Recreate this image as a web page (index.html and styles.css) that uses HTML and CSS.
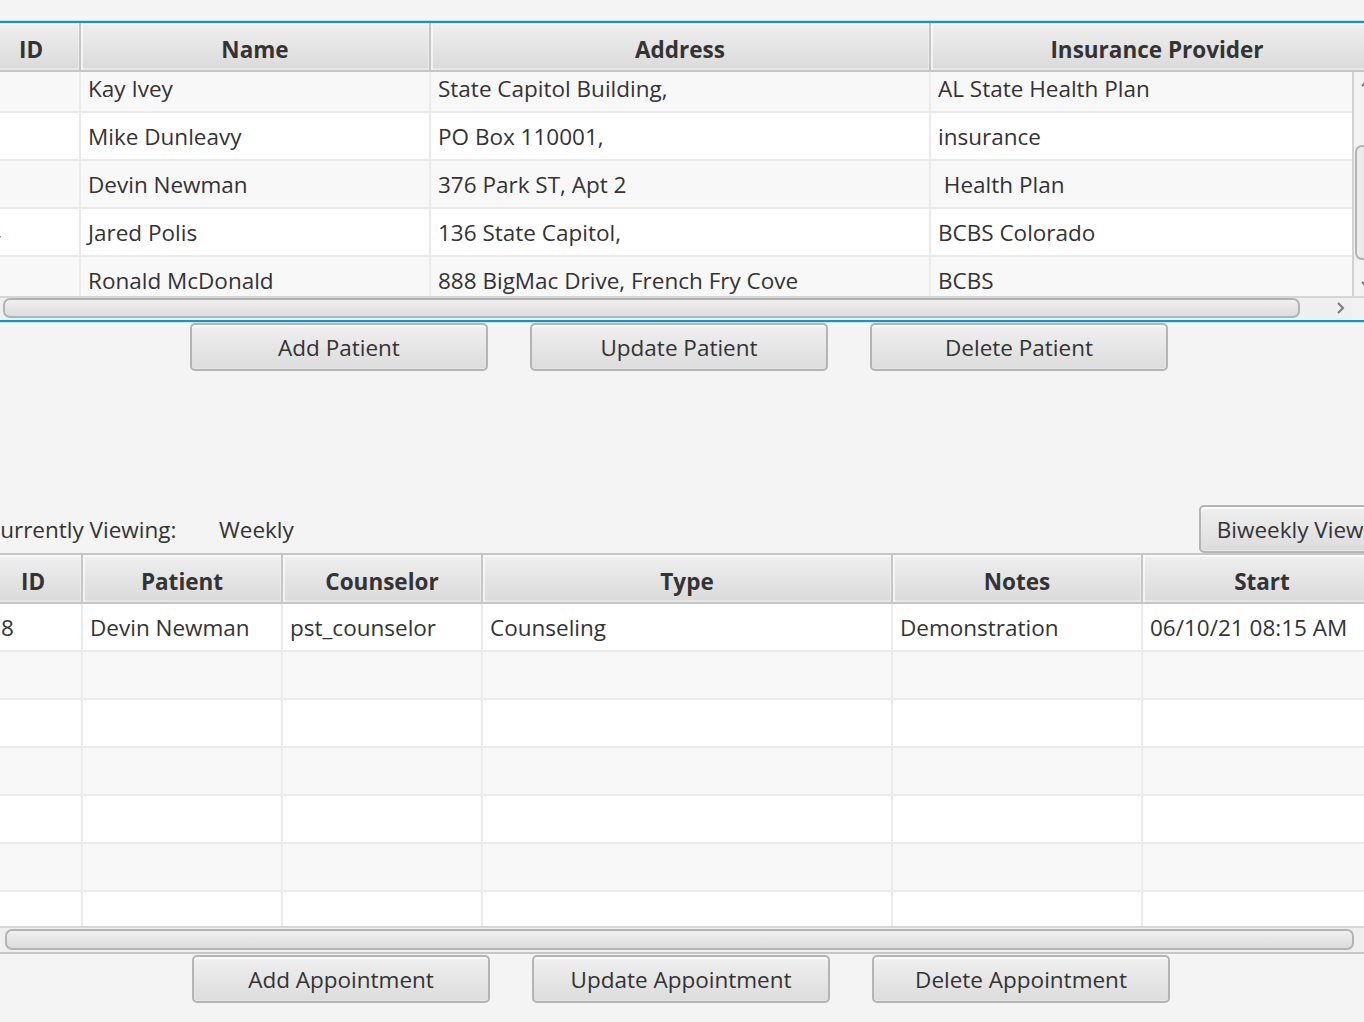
FILE: index.html
```html
<!DOCTYPE html>
<html lang="en">
<head>
<meta charset="utf-8">
<title>Patients and Appointments</title>
<link rel="stylesheet" href="styles.css">
</head>
<body>
<div class="screen">

  <div class="table patients">
    <div class="thead">
      <div class="th w-id">ID</div>
      <div class="th w-name">Name</div>
      <div class="th w-addr">Address</div>
      <div class="th w-ins">Insurance Provider</div>
    </div>
    <div class="tbody">
      <div class="viewport">
        <div class="rows scrolled">
          <div class="tr alt">
            <div class="td w-id td-pid">1</div>
            <div class="td w-name">Kay Ivey</div>
            <div class="td w-addr">State Capitol Building,</div>
            <div class="td w-ins">AL State Health Plan</div>
          </div>
          <div class="tr">
            <div class="td w-id td-pid">2</div>
            <div class="td w-name">Mike Dunleavy</div>
            <div class="td w-addr">PO Box 110001,</div>
            <div class="td w-ins">insurance</div>
          </div>
          <div class="tr alt">
            <div class="td w-id td-pid">3</div>
            <div class="td w-name">Devin Newman</div>
            <div class="td w-addr">376 Park ST, Apt 2</div>
            <div class="td w-ins"> Health Plan</div>
          </div>
          <div class="tr">
            <div class="td w-id td-pid">4</div>
            <div class="td w-name">Jared Polis</div>
            <div class="td w-addr">136 State Capitol,</div>
            <div class="td w-ins">BCBS Colorado</div>
          </div>
          <div class="tr alt">
            <div class="td w-id td-pid">5</div>
            <div class="td w-name">Ronald McDonald</div>
            <div class="td w-addr">888 BigMac Drive, French Fry Cove</div>
            <div class="td w-ins">BCBS</div>
          </div>
        </div>
      </div>
      <div class="vscroll">
        <div class="vbtn">
          <svg width="12" height="8" viewBox="0 0 12 8"><polyline points="1,7 6,2 11,7" fill="none" stroke="#7a7a7a" stroke-width="2"/></svg>
        </div>
        <div class="vtrack">
          <div class="vthumb"></div>
        </div>
        <div class="vbtn">
          <svg width="12" height="8" viewBox="0 0 12 8"><polyline points="1,1 6,6 11,1" fill="none" stroke="#7a7a7a" stroke-width="2"/></svg>
        </div>
      </div>
    </div>
    <div class="hbar">
      <div class="htrack">
        <div class="hbtn hbtn-left">
          <svg width="8" height="12" viewBox="0 0 8 12"><polyline points="7,1 2,6 7,11" fill="none" stroke="#7a7a7a" stroke-width="2"/></svg>
        </div>
        <div class="hthumb hthumb-top"></div>
        <div class="hgap"></div>
        <div class="hbtn">
          <svg width="8" height="12" viewBox="0 0 8 12"><polyline points="1,1 6,6 1,11" fill="none" stroke="#7a7a7a" stroke-width="2"/></svg>
        </div>
      </div>
      <div class="corner"></div>
    </div>
  </div>

  <div class="btn-row btn-row-top">
    <button class="btn">Add Patient</button>
    <button class="btn">Update Patient</button>
    <button class="btn">Delete Patient</button>
  </div>

  <div class="view-row">
    <span class="view-label">Currently Viewing:</span>
    <span class="view-value">Weekly</span>
    <button class="btn btn-view">Biweekly View</button>
  </div>

  <div class="table appts">
    <div class="thead">
      <div class="th w-aid">ID</div>
      <div class="th w-pat">Patient</div>
      <div class="th w-cou">Counselor</div>
      <div class="th w-type">Type</div>
      <div class="th w-notes">Notes</div>
      <div class="th w-start">Start</div>
    </div>
    <div class="tbody tbody-appts">
      <div class="viewport">
        <div class="rows">
          <div class="tr">
            <div class="td w-aid td-id">8</div>
            <div class="td w-pat">Devin Newman</div>
            <div class="td w-cou">pst_counselor</div>
            <div class="td w-type">Counseling</div>
            <div class="td w-notes">Demonstration</div>
            <div class="td w-start">06/10/21 08:15 AM</div>
          </div>
          <div class="tr alt"><div class="td w-aid"></div><div class="td w-pat"></div><div class="td w-cou"></div><div class="td w-type"></div><div class="td w-notes"></div><div class="td w-start"></div></div>
          <div class="tr"><div class="td w-aid"></div><div class="td w-pat"></div><div class="td w-cou"></div><div class="td w-type"></div><div class="td w-notes"></div><div class="td w-start"></div></div>
          <div class="tr alt"><div class="td w-aid"></div><div class="td w-pat"></div><div class="td w-cou"></div><div class="td w-type"></div><div class="td w-notes"></div><div class="td w-start"></div></div>
          <div class="tr"><div class="td w-aid"></div><div class="td w-pat"></div><div class="td w-cou"></div><div class="td w-type"></div><div class="td w-notes"></div><div class="td w-start"></div></div>
          <div class="tr alt"><div class="td w-aid"></div><div class="td w-pat"></div><div class="td w-cou"></div><div class="td w-type"></div><div class="td w-notes"></div><div class="td w-start"></div></div>
          <div class="tr"><div class="td w-aid"></div><div class="td w-pat"></div><div class="td w-cou"></div><div class="td w-type"></div><div class="td w-notes"></div><div class="td w-start"></div></div>
        </div>
      </div>
    </div>
    <div class="hbar hbar-appts">
      <div class="htrack">
        <div class="hbtn hbtn-left">
          <svg width="8" height="12" viewBox="0 0 8 12"><polyline points="7,1 2,6 7,11" fill="none" stroke="#7a7a7a" stroke-width="2"/></svg>
        </div>
        <div class="hthumb hthumb-bottom"></div>
        <div class="hgap"></div>
        <div class="hbtn">
          <svg width="8" height="12" viewBox="0 0 8 12"><polyline points="1,1 6,6 1,11" fill="none" stroke="#7a7a7a" stroke-width="2"/></svg>
        </div>
      </div>
    </div>
  </div>

  <div class="btn-row btn-row-bottom">
    <button class="btn">Add Appointment</button>
    <button class="btn">Update Appointment</button>
    <button class="btn">Delete Appointment</button>
  </div>

</div>
</body>
</html>
```

FILE: styles.css
```css
* {
  box-sizing: border-box;
}

html,
body {
  margin: 0;
  padding: 0;
}

body {
  width: 1364px;
  height: 1022px;
  overflow: hidden;
  background: #f4f4f4;
  font-family: "Open Sans", "Noto Sans", "DejaVu Sans", sans-serif;
  font-size: 22.5px;
  color: #333333;
}

.screen {
  margin-left: -19px;
  width: 1440px;
  padding-top: 21px;
}

/* ---------- tables ---------- */
.table {
  display: flex;
  flex-direction: column;
  overflow: hidden;
}

.patients {
  width: 1401px;
  border: 2px solid #0b98cb;
  box-shadow: 0 0 0 1px #c3e3ef;
}

.appts {
  width: 1406px;
  margin-left: 2px;
  border: 2px solid #c6c6c6;
}

.thead {
  display: flex;
  flex: none;
  height: 49px;
  border-bottom: 2px solid #c6c6c6;
  overflow: hidden;
  background: #dcdcdc;
}

.th {
  flex: none;
  height: 47px;
  padding-top: 6px;
  display: flex;
  align-items: center;
  justify-content: center;
  font-weight: 700;
  white-space: nowrap;
  background: linear-gradient(#efefef, #dadada);
  border-right: 2px solid #c6c6c6;
  box-shadow: inset 2px 2px 0 rgba(255, 255, 255, 0.6), inset -1px -2px 0 rgba(255, 255, 255, 0.35);
}

.tbody {
  display: flex;
  flex: none;
  height: 224px;
  background: #ffffff;
}

.tbody-appts {
  height: 322px;
}

.viewport {
  flex: 1;
  min-width: 0;
  overflow: hidden;
}

.rows.scrolled {
  margin-top: -7px;
}

.tr {
  display: flex;
  height: 48px;
  border-bottom: 2px solid #ebebeb;
  background: #ffffff;
}

.tr.alt {
  background: #f8f8f8;
}

.td {
  flex: none;
  height: 46px;
  display: flex;
  align-items: center;
  padding-left: 7px;
  border-right: 2px solid #ebebeb;
  white-space: pre;
  overflow: hidden;
}

.td-pid {
  padding-left: 5px;
}

.td-id {
  padding-left: 16px;
}

/* column widths: patients */
.w-id { width: 98px; }
.w-name { width: 350px; }
.w-addr { width: 500px; }
.w-ins { width: 454px; }

/* column widths: appointments */
.w-aid { width: 98px; }
.w-pat { width: 200px; }
.w-cou { width: 200px; }
.w-type { width: 410px; }
.w-notes { width: 250px; }
.w-start { width: 240px; }

/* ---------- vertical scrollbar ---------- */
.vscroll {
  flex: none;
  width: 28px;
  display: flex;
  flex-direction: column;
  background: #f2f2f2;
  border-left: 2px solid #d2d2d2;
}

.vbtn {
  flex: none;
  height: 22px;
  display: flex;
  align-items: center;
  justify-content: center;
}

.vtrack {
  flex: 1;
  padding: 51px 2px 14px 1px;
}

.vthumb {
  height: 115px;
  border: 2px solid #b3b3b3;
  border-radius: 7px;
  background: linear-gradient(to right, #eeeeee, #dcdcdc);
}

/* ---------- horizontal scrollbar ---------- */
.hbar {
  display: flex;
  flex: none;
  height: 24px;
  border-top: 2px solid #d6d6d6;
  background: #efefef;
}

.hbar-appts {
  height: 26px;
}

.htrack {
  flex: 1;
  display: flex;
  align-items: center;
  padding-bottom: 2px;
}

.hbar-appts .htrack {
  padding-bottom: 1px;
}

.hbtn {
  flex: none;
  width: 22px;
  height: 100%;
  display: flex;
  align-items: center;
  justify-content: center;
}

.hbtn-left {
  width: 20px;
}

.hthumb {
  flex: none;
  height: 20px;
  border: 2px solid #b3b3b3;
  border-radius: 7px;
  background: linear-gradient(#f0f0f0, #dcdcdc);
}

.hthumb-top {
  width: 1297px;
}

.hthumb-bottom {
  width: 1349px;
  height: 21px;
}

.hgap {
  flex: 1;
}

.corner {
  flex: none;
  width: 28px;
  background: #f2f2f2;
}

/* ---------- buttons ---------- */
.btn-row {
  display: flex;
  gap: 42px;
  margin-top: 1px;
}

.btn-row-top {
  padding-left: 209px;
}

.btn-row-bottom {
  padding-left: 211px;
}

.btn {
  width: 298px;
  height: 48px;
  padding: 0 16px;
  border: 2px solid #b4b4b4;
  border-radius: 5px;
  background: linear-gradient(#f0f0f0, #dcdcdc);
  box-shadow: inset 0 2px 0 rgba(255, 255, 255, 0.7), inset 0 -1px 0 rgba(255, 255, 255, 0.3);
  font-family: inherit;
  font-size: 22.5px;
  color: #333333;
  white-space: nowrap;
}

/* ---------- view row ---------- */
.view-row {
  display: flex;
  align-items: center;
  height: 48px;
  margin-top: 134px;
}

.view-label {
  width: 233px;
  margin-left: 5px;
}

.view-value {
  flex: none;
}

.btn-view {
  width: 182px;
  margin-left: 905px;
}
```
